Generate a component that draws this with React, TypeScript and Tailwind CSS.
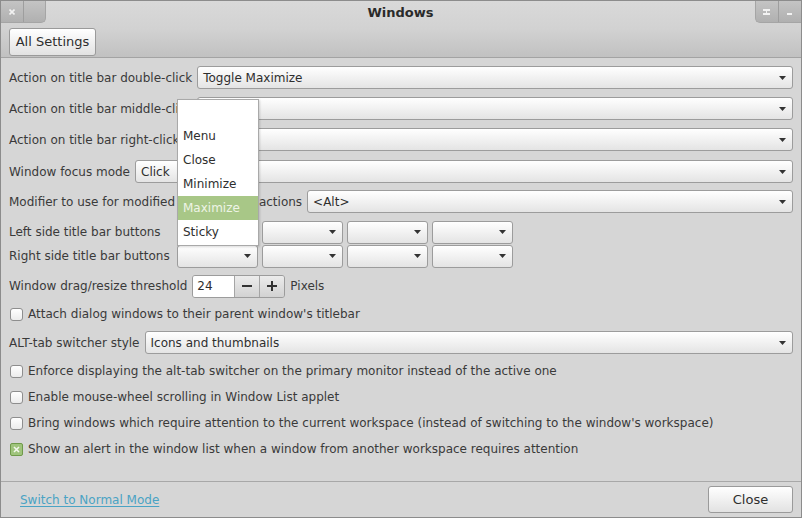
import React from 'react'

const font = { fontFamily: '"DejaVu Sans", "Liberation Sans", sans-serif' }

function Arrow() {
  return (
    <svg width="7" height="4" viewBox="0 0 7 4" className="shrink-0">
      <polygon points="0,0 7,0 3.5,4" fill="#333" />
    </svg>
  )
}

function Combo({ value = '', className = '' }: { value?: string; className?: string }) {
  return (
    <div
      className={`h-[23px] flex items-center justify-between rounded-[3px] border border-[#9c9c9c] bg-linear-to-b from-white to-[#e4e4e4] pl-[5px] pr-[6px] ${className}`}
    >
      <span className="text-[#2e2e2e]">{value}</span>
      <Arrow />
    </div>
  )
}

function Check({ checked = false, label }: { checked?: boolean; label: string }) {
  return (
    <div className="flex items-center h-[22px] pl-[1px]">
      {checked ? (
        <div className="w-[13px] h-[13px] rounded-[2px] border border-[#6f9a4a] bg-[#9fc47c] flex items-center justify-center">
          <svg width="7" height="7" viewBox="0 0 7 7">
            <path d="M1 1 L6 6 M6 1 L1 6" stroke="#f4f8ee" strokeWidth="1.6" />
          </svg>
        </div>
      ) : (
        <div className="w-[13px] h-[13px] rounded-[3px] border border-[#8e8e8e] bg-linear-to-b from-white to-[#ececec]" />
      )}
      <span className="ml-[5px]">{label}</span>
    </div>
  )
}

function Row({ label, children, className = '' }: { label: string; children: React.ReactNode; className?: string }) {
  return (
    <div className={`flex items-center gap-[5px] ${className}`}>
      <span className="whitespace-nowrap">{label}</span>
      {children}
    </div>
  )
}

function ButtonRow({ label, className = '' }: { label: string; className?: string }) {
  return (
    <div className={`flex items-center h-[24px] ${className}`}>
      <span className="w-[168px] whitespace-nowrap">{label}</span>
      <div className="flex gap-[4px]">
        <Combo className="w-[81px]" />
        <Combo className="w-[81px]" />
        <Combo className="w-[81px]" />
        <Combo className="w-[81px]" />
      </div>
    </div>
  )
}

export default function App() {
  return (
    <div
      style={font}
      className="relative w-[802px] h-[518px] bg-[#d6d6d6] border border-[#8c8c8c] text-[12px] text-[#3a3a3a] flex flex-col overflow-hidden"
    >
      {/* title bar + toolbar */}
      <div className="h-[57px] bg-linear-to-b from-[#d9d9d9] via-[#d2d2d2] to-[#c1c1c1] border-b border-[#a3a3a3] relative">
        <div className="flex justify-between h-[22px]">
          <div className="flex h-[22px] w-[45px] rounded-br-[5px] bg-linear-to-b from-[#c4c4c4] to-[#b0b0b0] border-r border-b border-[#a5a5a5]">
            <div className="w-[23px] flex items-center justify-center border-r border-[#9e9e9e]">
              <svg width="6" height="6" viewBox="0 0 6 6">
                <path d="M0.5 0.5 L5.5 5.5 M5.5 0.5 L0.5 5.5" stroke="#f2f2f2" strokeWidth="1.6" />
              </svg>
            </div>
            <div className="flex-1" />
          </div>
          <span className="font-bold text-[13px] text-[#2a2a2a] self-center pt-[1px]">Windows</span>
          <div className="flex h-[22px] w-[46px] rounded-bl-[5px] bg-linear-to-b from-[#c4c4c4] to-[#b0b0b0] border-l border-b border-[#a5a5a5]">
            <div className="w-[23px] flex items-center justify-center border-r border-[#9e9e9e]">
              <svg width="7" height="6" viewBox="0 0 7 6">
                <rect x="0" y="0" width="7" height="2" fill="#f2f2f2" />
                <rect x="0" y="4" width="7" height="2" fill="#f2f2f2" />
                <rect x="3" y="2" width="1" height="2" fill="#f2f2f2" />
              </svg>
            </div>
            <div className="flex-1 flex items-end justify-center pb-[7px]">
              <div className="w-[5px] h-[2px] bg-[#f2f2f2]" />
            </div>
          </div>
        </div>
        <div className="absolute left-[8px] top-[27px] h-[28px] w-[87px] rounded-[3px] border border-[#9a9a9a] bg-linear-to-b from-white to-[#e2e2e2] flex items-center justify-center text-[13px] text-[#2e2e2e]">
          All Settings
        </div>
      </div>

      {/* content */}
      <div className="flex-1 pl-[8px] pr-[8px] pt-[8px] flex flex-col">
        <Row label="Action on title bar double-click">
          <Combo value="Toggle Maximize" className="flex-1" />
        </Row>
        <Row label="Action on title bar middle-click" className="mt-[8px]">
          <Combo className="flex-1" />
        </Row>
        <Row label="Action on title bar right-click" className="mt-[8px]">
          <Combo className="flex-1" />
        </Row>
        <Row label="Window focus mode" className="mt-[9px]">
          <Combo value="Click" className="flex-1" />
        </Row>
        <Row label="Modifier to use for modified window click actions" className="mt-[7px]">
          <Combo value="<Alt>" className="flex-1" />
        </Row>
        <ButtonRow label="Left side title bar buttons" className="mt-[7px]" />
        <ButtonRow label="Right side title bar buttons" />
        <div className="flex items-center mt-[7px] h-[22px]">
          <span>Window drag/resize threshold</span>
          <div className="ml-[5px] flex h-[23px] rounded-[3px] border border-[#9c9c9c] overflow-hidden">
            <div className="w-[41px] bg-white flex items-center pl-[4px] text-[#2e2e2e]">24</div>
            <div className="w-[25px] border-l border-[#a5a5a5] bg-linear-to-b from-[#ececec] to-[#d2d2d2] flex items-center justify-center">
              <div className="w-[10px] h-[2px] bg-[#333]" />
            </div>
            <div className="w-[25px] border-l border-[#a5a5a5] bg-linear-to-b from-[#ececec] to-[#d2d2d2] flex items-center justify-center relative">
              <div className="w-[10px] h-[2px] bg-[#333]" />
              <div className="absolute w-[2px] h-[10px] bg-[#333]" />
            </div>
          </div>
          <span className="ml-[5px]">Pixels</span>
        </div>
        <div className="mt-[6px]">
          <Check label="Attach dialog windows to their parent window's titlebar" />
        </div>
        <Row label="ALT-tab switcher style" className="mt-[6px]">
          <Combo value="Icons and thumbnails" className="flex-1" />
        </Row>
        <div className="mt-[6px] flex flex-col gap-[4px]">
          <Check label="Enforce displaying the alt-tab switcher on the primary monitor instead of the active one" />
          <Check label="Enable mouse-wheel scrolling in Window List applet" />
          <Check label="Bring windows which require attention to the current workspace (instead of switching to the window's workspace)" />
          <Check checked label="Show an alert in the window list when a window from another workspace requires attention" />
        </div>
      </div>

      {/* footer */}
      <div className="h-[36px] border-t border-[#a8a8a8] flex items-center justify-between pl-[19px] pr-[8px]">
        <span className="text-[#4aa3c4] underline underline-offset-2 text-[12px]">Switch to Normal Mode</span>
        <div className="h-[27px] w-[85px] rounded-[3px] border border-[#9a9a9a] bg-linear-to-b from-white to-[#e2e2e2] flex items-center justify-center text-[13px] text-[#2e2e2e]">
          Close
        </div>
      </div>

      {/* popup menu */}
      <div className="absolute left-[176px] top-[98px] w-[82px] h-[147px] bg-white border border-[#a9a9a9] shadow-[1px_1px_2px_rgba(0,0,0,0.15)] flex flex-col pt-[24px]">
        {['Menu', 'Close', 'Minimize', 'Maximize', 'Sticky'].map((item) => (
          <div
            key={item}
            className={`h-[24px] flex items-center pl-[5px] text-[#2e2e2e] ${item === 'Maximize' ? 'bg-[#a8c787] text-[#eef4e6]' : ''}`}
          >
            {item}
          </div>
        ))}
      </div>
    </div>
  )
}
